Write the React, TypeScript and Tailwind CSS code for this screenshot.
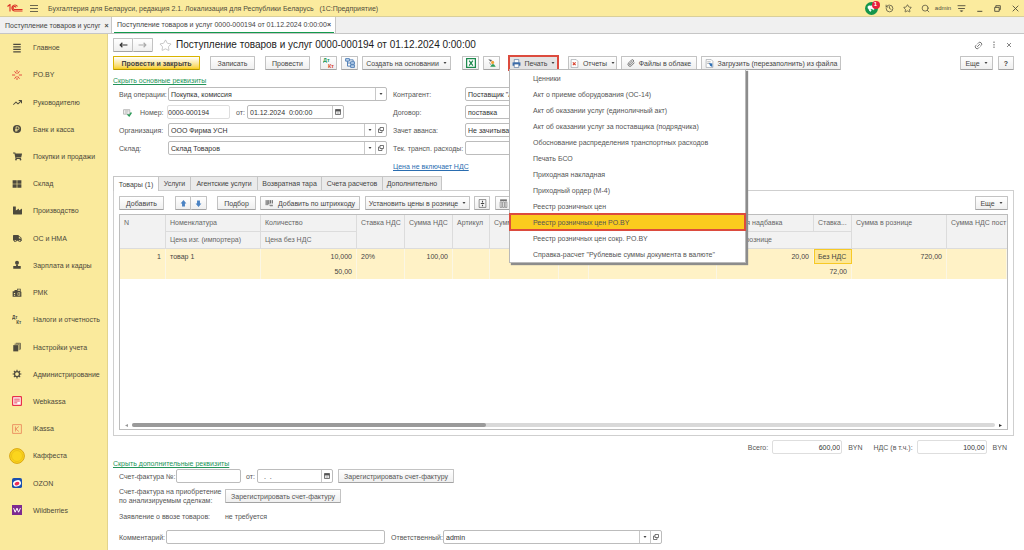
import React from "react";
import { FaShoppingCart, FaTruck, FaIndustry } from "react-icons/fa";
import { FaArrowTrendUp } from "react-icons/fa6";
import { History, Link2, Megaphone, Paperclip, Search, Star } from "lucide-react";

type Kids = { children?: React.ReactNode; className?: string };

/* ---------- icons ---------- */

const Dark = ({ children }: Kids) => (
  <svg viewBox="0 0 16 16" className="size-[10px]" fill="#4d4a3d">{children}</svg>
);

const DtKt = ({ a, b, className = "" }: { a: string; b: string; className?: string }) => (
  <svg viewBox="0 0 12 12" className={className} fontFamily="Liberation Sans" fontWeight="bold">
    <text x="0" y="5" fontSize="5.5" fill={a}>Дт</text>
    <text x="5" y="11" fontSize="5.5" fill={b}>Кт</text>
  </svg>
);

const Arrow = () => (
  <svg viewBox="0 0 6 4" className="h-[2px] w-[4px] shrink-0" fill="#444"><path d="M0 0h6L3 4z" /></svg>
);

const OpenIcon = () => (
  <svg viewBox="0 0 12 12" className="size-[6px]" fill="none" stroke="#555" strokeWidth="1.6">
    <path d="M4 1h7v6H4zM4 4H1v7h7V7" />
  </svg>
);

const CalendarIcon = () => (
  <svg viewBox="0 0 12 12" className="size-[6px]"><path d="M1 1h10v10H1z" fill="#fff" stroke="#555" strokeWidth="1.6" /><path d="M1 1h10v4H1z" fill="#555" /><path d="M3 7h6M3 9h6" stroke="#999" /></svg>
);

const PrinterIcon = () => (
  <svg viewBox="0 0 16 16" className="size-[9px]"><path d="M4 1h8v6H4z" fill="#fff" stroke="#3b5f8c" /><path d="M1 6h14v6H1z" fill="#3d6fae" /><path d="M4 9h8v6H4z" fill="#fff" stroke="#3b5f8c" /></svg>
);

const Doc = ({ children }: Kids) => (
  <svg viewBox="0 0 16 16" className="size-[9px]"><path d="M2 1h9l3 3v11H2z" fill="#fff" stroke="#8a8f96" />{children}</svg>
);

/* ---------- sidebar ---------- */

const sections: { label: string; icon: React.ReactNode }[] = [
  { label: "Главное", icon: <Dark><path d="M2 1h12v2H2zM2 5h12v2H2zM2 9h12v2H2zM2 13h12v2H2z" /></Dark> },
  { label: "PO.BY", icon: <svg viewBox="0 0 16 16" className="size-[10px]" stroke="#e2483d" strokeWidth="1.5"><path d="M8 0v4M8 12v4M0 8h5M11 8h5M4 2l3 4M12 2L9 6M4 14l3-4M12 14l-3-4" /></svg> },
  { label: "Руководителю", icon: <FaArrowTrendUp className="size-[9px] text-[#4d4a3d]" /> },
  { label: "Банк и касса", icon: <Dark><circle cx="8" cy="8" r="6.5" /><path d="M6.5 12V4.500h2.500a2 2 0 0 1 0 4.500H5M5 10.800h4" fill="none" stroke="#faea9c" strokeWidth="1.3" /></Dark> },
  { label: "Покупки и продажи", icon: <FaShoppingCart className="size-[9px] text-[#4d4a3d]" /> },
  { label: "Склад", icon: <Dark><path d="M1 2h6.500v5.500H1zM8.500 2H15v5.500H8.500zM1 8.500h6.500V14H1zM8.500 8.500H15V14H8.500z" /></Dark> },
  { label: "Производство", icon: <FaIndustry className="size-[9px] text-[#4d4a3d]" /> },
  { label: "ОС и НМА", icon: <FaTruck className="size-[9px] text-[#4d4a3d]" /> },
  { label: "Зарплата и кадры", icon: <Dark><circle cx="8" cy="4.500" r="3.200" /><path d="M6.500 7h3v2.500H14V14H2V9.500h4.500z" /></Dark> },
  { label: "РМК", icon: <Dark><path d="M1 5h3V3h4V1h6v5h1v8H1z" /><path d="M9 2.500h4v2H9zM3 8h2v2H3zM3 11h2v1.500H3zM9 7h4v5H9z" fill="#faea9c" /><path d="M10 8h2v3h-2z" /></Dark> },
  { label: "Налоги и отчетность", icon: <DtKt a="#4d4a3d" b="#4d4a3d" className="size-[10px]" /> },
  { label: "Настройки учета", icon: <Dark><path d="M2 5h8v10H2z" /><path d="M4 3.500h7.500V13M6 2h7.500v10" fill="none" stroke="#4d4a3d" strokeWidth="1.200" /></Dark> },
  { label: "Администрирование", icon: <svg viewBox="0 0 16 16" className="size-[10px]" fill="none" stroke="#4d4a3d"><circle cx="8" cy="8" r="4" strokeWidth="2" /><path d="M8 1v3M8 12v3M1 8h3M12 8h3M3 3l2 2M11 11l2 2M13 3l-2 2M3 13l2-2" strokeWidth="1.800" /></svg> },
  { label: "Webkassa", icon: <svg viewBox="0 0 16 16" className="size-[10px]"><rect x="1" y="1" width="14" height="14" rx="1" fill="#fff" stroke="#e8304a" strokeWidth="2" /><path d="M3.500 5h9M3.500 8h9M3.500 11h5" stroke="#e8304a" strokeWidth="1.500" /></svg> },
  { label: "iKassa", icon: <svg viewBox="0 0 16 16" className="size-[10px]" fill="none" stroke="#e87952"><path d="M1 1h14v14H1zM5.500 4v8M11 4L6 8l5 4" strokeWidth="1.200" /></svg> },
  { label: "Каффеста", icon: <svg viewBox="0 0 16 16" className="size-[16px]"><circle cx="8" cy="8" r="7.400" fill="#fbd51d" stroke="#d9a514" /><circle cx="8" cy="8" r="5.500" fill="none" stroke="#e3b416" strokeWidth=".6" /></svg> },
  { label: "OZON", icon: <svg viewBox="0 0 16 16" className="size-[10px]"><rect width="16" height="16" rx="3" fill="#1b4fae" /><ellipse cx="8" cy="8.500" rx="6.500" ry="5" fill="#fff" transform="rotate(-20 8 8.500)" /><ellipse cx="8" cy="9" rx="4" ry="2.800" fill="#ef2d55" transform="rotate(-20 8 9)" /></svg> },
  { label: "Wildberries", icon: <svg viewBox="0 0 16 16" className="size-[10px]"><rect width="16" height="16" fill="#7d2a90" /><path d="M2.500 5l2.500 6.500L8 5l2.500 6.500L13.500 5" fill="none" stroke="#fff" strokeWidth="1.600" /></svg> },
];

/* ---------- controls ---------- */

const Btn = ({ children, className = "", ...rest }: React.ButtonHTMLAttributes<HTMLButtonElement>) => (
  <button type="button" {...rest} className={`flex h-[14px] shrink-0 items-center justify-center gap-[4px] whitespace-nowrap rounded-[1px] border border-[#c3c3c3] border-b-[#a3a3a3] bg-linear-to-b from-white to-[#efefef] ${className}`}>
    {children}
  </button>
);

const Combo = ({ id, value, open, className = "" }: { id: string; value: string; open?: boolean; className?: string }) => (
  <div className={`flex h-[14px] rounded-[2px] border border-[#bcbcbc] bg-white ${className}`}>
    <select id={id} className="min-w-0 flex-1 appearance-none pl-[2px] text-[#333] outline-none" defaultValue={value}>
      <option>{value}</option>
    </select>
    <span className="flex w-[11px] items-center justify-center border-l border-[#c8c8c8]"><Arrow /></span>
    {open && <button type="button" aria-label="Открыть" className="flex w-[11px] items-center justify-center border-l border-[#c8c8c8]"><OpenIcon /></button>}
  </div>
);

const DateBox = ({ id, value, className = "" }: { id: string; value: string; className?: string }) => (
  <div className={`flex h-[14px] rounded-[2px] border border-[#bcbcbc] bg-white ${className}`}>
    <input id={id} defaultValue={value} className="min-w-0 flex-1 pl-[2px] text-[#333] outline-none" />
    <button type="button" aria-label="Выбрать дату" className="flex w-[11px] items-center justify-center border-l border-[#c8c8c8]"><CalendarIcon /></button>
  </div>
);

const printForms = [
  "Ценники", "Акт о приеме оборудования (ОС-14)", "Акт об оказании услуг (единоличный акт)",
  "Акт об оказании услуг за поставщика (подрядчика)", "Обоснование распределения транспортных расходов",
  "Печать БСО", "Приходная накладная", "Приходный ордер (М-4)", "Реестр розничных цен",
  "Реестр розничных цен PO.BY", "Реестр розничных цен сокр. PO.BY",
  'Справка-расчет "Рублевые суммы документа в валюте"',
];

const tabs = [
  { label: "Товары (1)", width: "w-[46px]" },
  { label: "Услуги", width: "w-[32px]" },
  { label: "Агентские услуги", width: "w-[67px]" },
  { label: "Возвратная тара", width: "w-[64px]" },
  { label: "Счета расчетов", width: "w-[61px]" },
  { label: "Дополнительно", width: "w-[59px]" },
];

const Th = ({ children, className = "", ...rest }: React.ThHTMLAttributes<HTMLTableCellElement>) => (
  <th {...rest} className={`overflow-hidden whitespace-nowrap border-r border-b border-[#dcdcdc] pl-[4px] text-left align-top font-normal leading-[16px] ${className}`}>{children}</th>
);
const Td = ({ children, className = "", ...rest }: React.TdHTMLAttributes<HTMLTableCellElement>) => (
  <td {...rest} className={`border-r border-[#fbf6e4] px-[4px] ${className}`}>{children}</td>
);

function GoodsTable() {
  return (
    <table className="w-full table-fixed border-separate border-spacing-0">
      <colgroup>
        <col className="w-[46px]" /><col className="w-[95px]" /><col className="w-[96px]" /><col className="w-[48px]" />
        <col className="w-[48px]" /><col className="w-[37px]" /><col className="w-[69px]" /><col className="w-[30px]" />
        <col className="w-[128px]" /><col className="w-[97px]" /><col className="w-[38px]" /><col className="w-[95px]" /><col />
      </colgroup>
      <thead className="bg-[#f2f2f2] text-[#666]">
        <tr className="h-[17px]">
          <Th rowSpan={2}>N</Th><Th>Номенклатура</Th><Th>Количество</Th><Th rowSpan={2}>Ставка НДС</Th>
          <Th rowSpan={2}>Сумма НДС</Th><Th rowSpan={2}>Артикул</Th><Th rowSpan={2}>Сумма</Th><Th rowSpan={2} />
          <Th rowSpan={2} /><Th>Торговая надбавка</Th><Th>Ставка...</Th><Th rowSpan={2}>Сумма в рознице</Th>
          <Th rowSpan={2} className="border-r-0">Сумма НДС пост</Th>
        </tr>
        <tr className="h-[17px]">
          <Th>Цена изг. (импортера)</Th><Th>Цена без НДС</Th><Th colSpan={2}>Цена в рознице</Th>
        </tr>
      </thead>
      <tbody className="bg-[#fff2c6] text-[#444]">
        <tr className="h-[15px]">
          <Td className="text-right">1</Td><Td>товар 1</Td><Td className="text-right">10,000</Td><Td>20%</Td>
          <Td className="text-right">100,00</Td><Td /><Td /><Td /><Td /><Td className="text-right">20,00</Td>
          <td className="border border-[#f7c925] bg-[#fde797] px-[3px] whitespace-nowrap">Без НДС</td>
          <Td className="text-right">720,00</Td><Td />
        </tr>
        <tr className="h-[15px]">
          <Td /><Td /><Td className="text-right">50,00</Td><Td /><Td /><Td /><Td /><Td /><Td />
          <Td colSpan={2} className="text-right">72,00</Td><Td /><Td />
        </tr>
      </tbody>
    </table>
  );
}

export default function App() {
  return (
    <div className="flex min-h-screen flex-col bg-white font-['Liberation_Sans',Arial,sans-serif] text-[7px] leading-[9px] text-[#555]">
      <header className="flex h-[17px] shrink-0 items-center border-b border-[#d9cf9a] bg-[#fbeb9e] pl-[7px] text-[#504d3c]">
        <svg viewBox="0 0 32 16" className="h-[8px] w-[16px]" fill="none" stroke="#dc2f26" strokeWidth="2.200">
          <path d="M1 5l5-4v14M21 5a6 6 0 1 0-6 9h16M18 7a3 3 0 1 0-3 4h16" />
        </svg>
        <button type="button" aria-label="Меню" className="ml-[7px] flex w-[8px] flex-col gap-[2px]">
          <span className="h-px w-full bg-[#6b674f]" /><span className="h-px w-full bg-[#6b674f]" /><span className="h-px w-full bg-[#6b674f]" />
        </button>
        <span className="ml-[10px] whitespace-pre">Бухгалтерия для Беларуси, редакция 2.1. Локализация для Республики Беларусь   (1С:Предприятие)</span>
        <div className="ml-auto grid auto-cols-[18px] grid-flow-col place-items-center">
          <button type="button" aria-label="Уведомления" className="relative flex size-[13px] items-center justify-center rounded-full bg-[#14954b] text-white">
            <Megaphone className="size-[8px] fill-white" />
            <span className="absolute -top-px -right-[2px] flex size-[8px] items-center justify-center rounded-full bg-[#e8213b] text-[6px] font-bold">1</span>
          </button>
          <History className="size-[9px]" /><Star className="size-[9px]" /><Search className="size-[9px]" />
          <span className="text-[6px]">admin</span>
          <svg viewBox="0 0 16 16" className="size-[9px]" fill="none" stroke="#504d3c" strokeWidth="1.600"><path d="M1 3h14M2 8h12M6 12h4l-2 2z" /></svg>
          <svg viewBox="0 0 16 16" className="size-[9px]" stroke="#504d3c" strokeWidth="1.800"><path d="M4 13h9" /></svg>
          <svg viewBox="0 0 16 16" className="size-[9px]" fill="none" stroke="#504d3c" strokeWidth="1.600"><path d="M3 6h8v7H3zM5 6V3h8v7h-2" /></svg>
          <svg viewBox="0 0 16 16" className="size-[9px]" stroke="#504d3c" strokeWidth="1.600"><path d="M3 3l10 10M13 3L3 13" /></svg>
        </div>
      </header>

      <div className="flex h-[17px] shrink-0 border-b border-[#c6c6c6] bg-[#f0f0f0] text-[#444]">
        <button type="button" className="flex w-[112px] items-center gap-[4px] border-r border-[#c6c6c6] pl-[5px] whitespace-nowrap">Поступление товаров и услуг <b>×</b></button>
        <button type="button" className="flex w-[224px] items-center border-r border-[#c6c6c6] bg-white px-[2px]">
          <span className="flex h-[15px] flex-1 items-center justify-between border-b border-[#129a4c] px-[3px] whitespace-nowrap">Поступление товаров и услуг 0000-000194 от 01.12.2024 0:00:00 <b>×</b></span>
        </button>
      </div>

      <div className="flex flex-1">
        <nav className="w-[108px] shrink-0 border-r border-[#e3d48c] bg-[#faea9c]">
          <div className="flex h-[490px] flex-col">
            {sections.map((s) => (
              <a key={s.label} href="#" className="flex flex-1 items-center gap-[8px] pl-[9px] whitespace-nowrap text-[#4b483a]">
                <span className="flex w-[16px] items-center justify-center">{s.icon}</span>{s.label}
              </a>
            ))}
          </div>
        </nav>

        <main className="flex min-w-0 flex-1 flex-col pt-[4px] pr-[10px] pb-[6px] pl-[5px]">
          <div className="flex h-[14px] items-center">
            <div className="flex">
              <Btn aria-label="Назад" className="w-[20px]"><svg viewBox="0 0 16 10" className="h-[6px] w-[9px]" fill="none" stroke="#333" strokeWidth="2"><path d="M15 5H2M6 1L2 5l4 4" /></svg></Btn>
              <Btn aria-label="Вперед" className="w-[20px] border-l-0"><svg viewBox="0 0 16 10" className="h-[6px] w-[9px]" fill="none" stroke="#aaa" strokeWidth="2"><path d="M1 5h13M10 1l4 4-4 4" /></svg></Btn>
            </div>
            <Star strokeWidth={1} className="ml-[6px] size-[13px] text-[#999]" />
            <h1 className="ml-[4px] text-[10px] leading-[14px] text-[#1c1c1c]">Поступление товаров и услуг 0000-000194 от 01.12.2024 0:00:00</h1>
            <div className="ml-auto flex items-center gap-[8px] pr-px">
              <Link2 className="size-[9px] -rotate-45" />
              <svg viewBox="0 0 8 16" className="h-[8px] w-[6px]" fill="#666"><path d="M3 1h2v3H3zM3 6h2v3H3zM3 11h2v3H3z" /></svg>
              <svg viewBox="0 0 16 16" className="size-[8px]" stroke="#777" strokeWidth="1.800"><path d="M4 4l8 8M12 4l-8 8" /></svg>
            </div>
          </div>

          <div className="mt-[4px] flex h-[14px] items-center text-[#444]">
            <Btn className="w-[87px] border-[#d9b400] border-b-[#b79600] from-[#ffe11a] to-[#f8cf00] font-bold">Провести и закрыть</Btn>
            <Btn className="ml-[10px] w-[45px]">Записать</Btn>
            <Btn className="ml-[10px] w-[45px]">Провести</Btn>
            <Btn aria-label="Дт Кт" className="ml-[10px] w-[17px]"><DtKt a="#1d9a56" b="#d8432f" className="size-[12px]" /></Btn>
            <Btn aria-label="Структура" className="ml-[4px] w-[17px]">
              <svg viewBox="0 0 16 16" className="size-[10px]" fill="#c5daf0" stroke="#4d7db5" strokeWidth="1.500"><path d="M1 1h6v4H1zM9 6h6v4H9zM9 11h6v4H9z" /><path d="M4 5v8h5M4 8h5M7 3h6v3" fill="none" /></svg>
            </Btn>
            <Btn className="ml-[4px] w-[89px]">Создать на основании <Arrow /></Btn>
            <Btn aria-label="Excel" className="ml-[11px] w-[17px]">
              <svg viewBox="0 0 16 16" className="size-[10px]"><path d="M1 1h14v14H1z" fill="#fff" stroke="#1d8a4e" strokeWidth="2" /><path d="M5 4l6 8M11 4l-6 8" stroke="#1d8a4e" strokeWidth="2" /></svg>
            </Btn>
            <Btn aria-label="Ответственный" className="ml-[4px] w-[17px]">
              <svg viewBox="0 0 16 16" className="size-[10px]"><path d="M2 2l6 1-2 3z" fill="#555" /><circle cx="9" cy="7" r="2.500" fill="#f0a13a" /><path d="M5 14l3-4h3l3 4z" fill="#2f9a57" /><path d="M4 7l2 4" stroke="#777" /></svg>
            </Btn>
            <div className="relative ml-[8px]">
              <button type="button" aria-haspopup="menu" aria-expanded className="flex h-[16px] w-[51px] items-center justify-center gap-[4px] border-2 border-[#dc4b3e] bg-[#e3e3e3]"><PrinterIcon />Печать <Arrow /></button>
              <ul className="absolute top-[14px] left-px z-10 w-[237px] border border-[#b9b9b9] bg-white text-[#555] shadow-[2px_2px_1px_#8c8c8c]">
                {printForms.map((f, i) => (
                  <li key={f}>
                    <button type="button" className={`flex h-[16px] w-full items-center whitespace-nowrap pl-[23px] ${i === 9 ? "bg-[#fbcb1e] outline-2 -outline-offset-1 outline-[#dc4b3e]" : ""}`}>{f}</button>
                  </li>
                ))}
              </ul>
            </div>
            <Btn className="ml-[9px] w-[49px]"><Doc><path d="M5 6l5 5M10 6l-5 5" stroke="#d8432f" strokeWidth="2" /></Doc>Отчеты <Arrow /></Btn>
            <Btn className="ml-[4px] w-[76px]"><Paperclip className="size-[8px]" />Файлы в облаке</Btn>
            <Btn className="ml-[4px] w-[140px]"><Doc><path d="M4 5h6M4 8h4" stroke="#777" /><path d="M7 7l6 1v6l-4-2z" fill="#2f6fb4" /></Doc>Загрузить (перезаполнить) из файла</Btn>
            <Btn className="ml-auto w-[33px]">Еще <Arrow /></Btn>
            <Btn className="ml-[5px] w-[16px] font-bold">?</Btn>
          </div>

          <a href="#" className="mt-[6px] self-start text-[#24955a] underline">Скрыть основные реквизиты</a>

          <div className="mt-[2px] flex gap-[6px] pl-[6px]">
            <div className="flex flex-col gap-[4px]">
              <div className="flex items-center"><label htmlFor="op" className="w-[49px]">Вид операции:</label><Combo id="op" value="Покупка, комиссия" className="w-[219px]" /></div>
              <div className="flex items-center">
                <svg viewBox="0 0 16 16" className="ml-[4px] size-[9px]"><path d="M1 3h11v8H1z" fill="#fff" stroke="#888" /><path d="M3 5h7M3 7h7M3 9h5" stroke="#999" /><path d="M8 11l3 3 4-6" fill="none" stroke="#2c9b58" strokeWidth="2.500" /></svg>
                <label htmlFor="num" className="ml-[8px] w-[27px]">Номер:</label>
                <input id="num" defaultValue="0000-000194" className="h-[14px] w-[63px] rounded-[2px] border border-[#dedede] text-[#333]" />
                <label htmlFor="date" className="ml-[6px] w-[11px]">от:</label>
                <DateBox id="date" value="01.12.2024  0:00:00" className="w-[97px]" />
              </div>
              <div className="flex items-center"><label htmlFor="org" className="w-[49px]">Организация:</label><Combo id="org" value="ООО Фирма УСН" open className="w-[219px]" /></div>
              <div className="flex items-center"><label htmlFor="wh" className="w-[49px]">Склад:</label><Combo id="wh" value="Склад Товаров" open className="w-[219px]" /></div>
            </div>
            <div className="flex flex-col gap-[4px]">
              <div className="flex items-center"><label htmlFor="ctr" className="w-[72px]">Контрагент:</label><Combo id="ctr" value={'Поставщик "А"'} open className="w-[219px]" /></div>
              <div className="flex items-center"><label htmlFor="agr" className="w-[72px]">Договор:</label><Combo id="agr" value="поставка" open className="w-[219px]" /></div>
              <div className="flex items-center"><label htmlFor="adv" className="w-[72px]">Зачет аванса:</label><Combo id="adv" value="Не зачитывать" className="w-[219px]" /></div>
              <div className="flex items-center"><label htmlFor="trn" className="w-[72px]">Тек. трансп. расходы:</label><Combo id="trn" value="" className="w-[219px]" /></div>
              <a href="#" className="mt-[3px] self-start text-[#2a6db0] underline">Цена не включает НДС</a>
            </div>
          </div>

          <div className="mt-[5px] flex text-[#444]" role="tablist">
            {tabs.map((t, i) => (
              <button key={t.label} type="button" role="tab" aria-selected={i === 0}
                className={`border-t border-r border-[#c6c6c6] whitespace-nowrap ${t.width} ${i === 0 ? "relative z-[1] -mb-px h-[15px] border-l bg-white" : "h-[14px] bg-[#ebebeb]"}`}>{t.label}</button>
            ))}
          </div>
          <section className="flex flex-1 flex-col border border-[#cfcfcf] p-[5px]">
            <div className="flex text-[#444]">
              <Btn className="w-[45px]">Добавить</Btn>
              <Btn aria-label="Вверх" className="ml-[11px] w-[16px]"><svg viewBox="0 0 12 12" className="size-[7px]" fill="#4b83c3"><path d="M6 0l5 6H8.500v5h-5V6H1z" /></svg></Btn>
              <Btn aria-label="Вниз" className="w-[16px] border-l-0"><svg viewBox="0 0 12 12" className="size-[7px]" fill="#4b83c3"><path d="M6 12l5-6H8.500V1h-5v5H1z" /></svg></Btn>
              <Btn className="ml-[10px] w-[39px]">Подбор</Btn>
              <Btn className="ml-[4px] w-[100px]"><svg viewBox="0 0 16 16" className="size-[9px]"><path d="M2 2v9M5 2v9M7 2v7M10 2v6M13 2v6" stroke="#444" strokeWidth="1.500" /><path d="M7 10h7v3H9z" fill="#888" /></svg>Добавить по штрихкоду</Btn>
              <Btn className="ml-[5px] w-[105px]">Установить цены в рознице <Arrow /></Btn>
              <Btn aria-label="Высота строк" className="ml-[4px] w-[16px]"><svg viewBox="0 0 16 16" className="size-[9px]" fill="none" stroke="#444"><path d="M2 1h12v14H2z" /><path d="M8 3v3M8 10v3M5 8h6" strokeWidth="2" /></svg></Btn>
              <Btn aria-label="Колонки" className="ml-[5px] w-[16px]"><svg viewBox="0 0 16 16" className="size-[9px]" fill="none" stroke="#666"><path d="M2 5h3v10H2zM6.500 5h3v10h-3zM11 5h3v10h-3z" /><path d="M2 2h12" stroke="#333" strokeWidth="2" /></svg></Btn>
              <Btn className="ml-auto w-[33px]">Еще <Arrow /></Btn>
            </div>
            <div className="mt-[4px] flex flex-1 flex-col border border-[#bdbdbd]">
              <GoodsTable />
              <div className="mt-auto flex h-[8px] items-center gap-[4px] px-[5px]">
                <svg viewBox="0 0 4 4" className="size-[3px]" fill="#999"><path d="M4 0v4L0 2z" /></svg>
                <div className="h-[4px] flex-1 rounded-full bg-[#d9d9d9]"><div className="h-full w-[41%] rounded-full bg-[#9a9a9a]" /></div>
                <svg viewBox="0 0 4 4" className="size-[3px]" fill="#333"><path d="M0 0v4l4-2z" /></svg>
              </div>
            </div>
          </section>

          <div className="mt-[4px] flex items-center justify-end pr-[7px]">
            <label htmlFor="tot">Всего:</label>
            <input id="tot" readOnly defaultValue="600,00" className="ml-[4px] h-[14px] w-[70px] rounded-[2px] border border-[#dedede] pr-px text-right text-[#333]" />
            <span className="ml-[6px]">BYN</span>
            <label htmlFor="vat" className="ml-[11px]">НДС (в т.ч.):</label>
            <input id="vat" readOnly defaultValue="100,00" className="ml-[4px] h-[14px] w-[70px] rounded-[2px] border border-[#dedede] pr-px text-right text-[#333]" />
            <span className="ml-[6px]">BYN</span>
          </div>

          <a href="#" className="mt-[5px] self-start text-[#24955a] underline">Скрыть дополнительные реквизиты</a>
          <div className="mt-px flex items-center pl-[6px]">
            <label htmlFor="inv" className="w-[57px]">Счет-фактура №:</label>
            <input id="inv" className="h-[14px] w-[65px] rounded-[2px] border border-[#bcbcbc]" />
            <label htmlFor="invd" className="ml-[5px] w-[11px]">от:</label>
            <DateBox id="invd" value="  .  ." className="w-[76px]" />
            <Btn className="ml-[5px] w-[116px]">Зарегистрировать счет-фактуру</Btn>
          </div>
          <div className="mt-[4px] flex items-center pl-[6px]">
            <span className="w-[106px]">Счет-фактура на приобретение<br />по анализируемым сделкам:</span>
            <Btn className="w-[116px]">Зарегистрировать счет-фактуру</Btn>
          </div>
          <div className="mt-[7px] flex pl-[6px]">
            <span className="w-[106px]">Заявление о ввозе товаров:</span><span>не требуется</span>
          </div>
          <div className="mt-[9px] flex items-center pl-[6px]">
            <label htmlFor="com" className="w-[47px]">Комментарий:</label>
            <input id="com" className="h-[14px] w-[219px] rounded-[2px] border border-[#bcbcbc]" />
            <label htmlFor="resp" className="ml-[6px] w-[52px]">Ответственный:</label>
            <Combo id="resp" value="admin" open className="w-[219px]" />
          </div>
        </main>
      </div>
    </div>
  );
}
